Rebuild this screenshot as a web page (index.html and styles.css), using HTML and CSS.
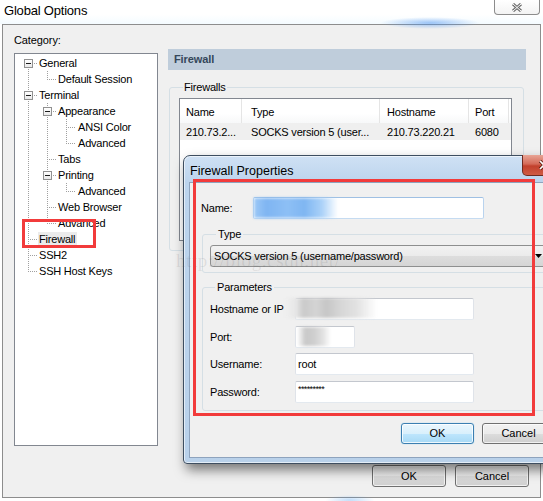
FILE: index.html
```html
<!DOCTYPE html>
<html>
<head>
<meta charset="utf-8">
<title>Global Options</title>
<link rel="stylesheet" href="styles.css">
</head>
<body>
<div class="glow glow-top"></div>
<div class="glow glow-bottom"></div>
<div class="win">
  <div class="wtitlebar">
    <span class="wtitle">Global Options</span>
    <div class="wclose">
      <svg width="12" height="9" viewBox="0 0 12 9"><path d="M2 1 L10 8 M10 1 L2 8" stroke="#707070" stroke-width="3" fill="none"/><path d="M2 1 L10 8 M10 1 L2 8" stroke="#fff" stroke-width="1" fill="none"/></svg>
    </div>
  </div>
  <div class="panel">
    <div class="panel-top">
      <div class="leftcol">
        <div class="cat">Category:</div>
        <div class="tree">
          <div class="row"><span class="g r"><span class="exp"></span></span><span class="lbl">General</span></div>
          <div class="row"><span class="g i"></span><span class="g l"></span><span class="lbl">Default Session</span></div>
          <div class="row"><span class="g t"><span class="exp"></span></span><span class="lbl">Terminal</span></div>
          <div class="row"><span class="g i"></span><span class="g t"><span class="exp"></span></span><span class="lbl">Appearance</span></div>
          <div class="row"><span class="g i"></span><span class="g i"></span><span class="g t"></span><span class="lbl lbl2">ANSI Color</span></div>
          <div class="row"><span class="g i"></span><span class="g i"></span><span class="g l"></span><span class="lbl lbl2">Advanced</span></div>
          <div class="row"><span class="g i"></span><span class="g t"></span><span class="lbl">Tabs</span></div>
          <div class="row"><span class="g i"></span><span class="g t"><span class="exp"></span></span><span class="lbl">Printing</span></div>
          <div class="row"><span class="g i"></span><span class="g i"></span><span class="g l"></span><span class="lbl lbl2">Advanced</span></div>
          <div class="row"><span class="g i"></span><span class="g t"></span><span class="lbl">Web Browser</span></div>
          <div class="row"><span class="g i"></span><span class="g l"></span><span class="lbl">Advanced</span></div>
          <div class="row"><span class="g t"></span><span class="lbl sel">Firewall</span></div>
          <div class="row"><span class="g t"></span><span class="lbl">SSH2</span></div>
          <div class="row"><span class="g l"></span><span class="lbl">SSH Host Keys</span></div>
        </div>
      </div>
      <div class="rightcol">
        <div class="pagehead">Firewall</div>
        <fieldset class="grp fwgrp">
          <legend>Firewalls</legend>
          <div class="list">
            <div class="lrow lhead"><span class="c1">Name</span><span class="c2">Type</span><span class="c3">Hostname</span><span class="c4">Port</span></div>
            <div class="lrow litem"><span class="c1">210.73.2...</span><span class="c2">SOCKS version 5 (user...</span><span class="c3">210.73.220.21</span><span class="c4">6080</span></div>
          </div>
        </fieldset>
      </div>
    </div>
    <div class="btnrow">
      <button class="btn mainbtn">OK</button>
      <button class="btn mainbtn">Cancel</button>
    </div>
  </div>
</div>

<div class="dlg">
  <div class="dtitle">Firewall Properties</div>
  <div class="dclose">
    <svg width="12" height="10" viewBox="0 0 12 10"><path d="M2 1 L10 9 M10 1 L2 9" stroke="#5a1a10" stroke-width="3.2" fill="none"/><path d="M2 1 L10 9 M10 1 L2 9" stroke="#fff" stroke-width="1.6" fill="none"/></svg>
  </div>
  <div class="dclient">
    <div class="nrow"><span class="nlabel">Name:</span><div class="tb tbname"></div></div>
    <fieldset class="grp tgrp">
      <legend>Type</legend>
      <div class="combo"><span>SOCKS version 5 (username/password)</span><svg class="arrow" width="7" height="4" viewBox="0 0 7 4"><path d="M0 0 H7 L3.5 4 Z" fill="#000"/></svg></div>
    </fieldset>
    <fieldset class="grp pgrp">
      <legend>Parameters</legend>
      <div class="pgrid">
        <span class="plabel">Hostname or IP</span><div class="tb wide"></div>
        <span class="plabel">Port:</span><div class="tb narrow"></div>
        <span class="plabel">Username:</span><div class="tb wide">root</div>
        <span class="plabel">Password:</span><div class="tb wide pw">*********</div>
      </div>
    </fieldset>
    <div class="dbtns">
      <button class="btn dbtn def">OK</button>
      <button class="btn dbtn">Cancel</button>
    </div>
  </div>
</div>

<div class="blur blur-name"></div>
<div class="blur blur-host"></div>
<div class="blur blur-port"></div>
<div class="watermark">http://blog.csdn.net/</div>
<div class="redbox red-tree"></div>
<div class="redbox red-dlg"></div>
</body>
</html>
```

FILE: styles.css
```css
html, body {
  margin: 0;
  padding: 0;
}
body {
  width: 543px;
  height: 501px;
  overflow: hidden;
  position: relative;
  background: #ffffff;
  font-family: "Liberation Sans", Arial, sans-serif;
  font-size: 11px;
  color: #000;
}

/* ---------- main window ---------- */
.win {
  position: relative;
}
.wtitlebar {
  height: 24px;
  display: flex;
  align-items: flex-start;
  background: linear-gradient(#ffffff, #ffffff 60%, #f4fbff);
}
.wtitle {
  padding-left: 4px;
  line-height: 22px;
  font-size: 13px;
  letter-spacing: -0.2px;
  color: #000;
}
.wclose {
  margin-left: auto;
  margin-right: 3px;
  width: 46px;
  height: 15px;
  box-sizing: border-box;
  border: 1px solid #8c8c8c;
  border-top: none;
  border-radius: 0 0 4px 4px;
  background: linear-gradient(#ffffff, #f3f3f3);
  display: flex;
  align-items: center;
  justify-content: center;
}

.panel {
  margin-left: 2px;
  width: 539px;
  height: 474px;
  box-sizing: border-box;
  border: 1px solid #8d8d8d;
  background: #f0f0f0;
  display: flex;
  flex-direction: column;
}
.panel-top {
  display: flex;
  align-items: flex-start;
}
.leftcol {
  padding: 8px 0 0 11px;
}
.cat {
  line-height: 14px;
  letter-spacing: -0.1px;
}
.tree {
  margin-top: 6px;
  width: 144px;
  height: 393px;
  box-sizing: border-box;
  border: 1px solid #828790;
  background: #ffffff;
  padding: 1px 0 0 4px;
}
.row {
  display: flex;
  height: 16px;
  align-items: center;
}
.g {
  flex: none;
  width: 19px;
  height: 16px;
  position: relative;
  display: flex;
  align-items: flex-start;
  justify-content: center;
}
.g::before,
.g::after {
  content: "";
  position: absolute;
}
.g.i::before,
.g.t::before {
  left: 9px;
  top: 0;
  width: 1px;
  height: 16px;
  background: repeating-linear-gradient(to bottom, #a0a0a0 0 1px, transparent 1px 2px);
}
.g.l::before {
  left: 9px;
  top: 0;
  width: 1px;
  height: 9px;
  background: repeating-linear-gradient(to bottom, #a0a0a0 0 1px, transparent 1px 2px);
}
.g.r::before {
  left: 9px;
  top: 8px;
  width: 1px;
  height: 8px;
  background: repeating-linear-gradient(to bottom, #a0a0a0 0 1px, transparent 1px 2px);
}
.g.i::after {
  display: none;
}
.g.t::after,
.g.l::after,
.g.r::after {
  left: 9px;
  top: 8px;
  width: 10px;
  height: 1px;
  background: repeating-linear-gradient(to right, #a0a0a0 0 1px, transparent 1px 2px);
}
.exp {
  margin-top: 4px;
  width: 9px;
  height: 9px;
  box-sizing: border-box;
  border: 1px solid #919191;
  background: linear-gradient(#ffffff, #e9e9e9);
  position: relative;
  z-index: 1;
  display: flex;
  align-items: center;
  justify-content: center;
}
.exp::before {
  content: "";
  width: 5px;
  height: 1px;
  background: #1c1c1c;
}
.lbl {
  padding: 0 2px 0 1px;
  line-height: 14px;
  white-space: nowrap;
  letter-spacing: -0.2px;
}
.lbl2 {
  padding-left: 2px;
}
.lbl.sel {
  background: #ebebeb;
}

.rightcol {
  margin-left: 10px;
  padding-top: 24px;
}
.pagehead {
  width: 358px;
  height: 21px;
  box-sizing: border-box;
  background: #bfcddb;
  padding-left: 6px;
  line-height: 21px;
  font-weight: bold;
  color: #34475a;
  letter-spacing: -0.1px;
}

.grp {
  margin: 0;
  border: 1px solid #d5dfe5;
  border-radius: 3px;
  box-sizing: border-box;
  min-width: 0;
}
.grp legend {
  padding: 0 2px;
  line-height: 14px;
  letter-spacing: -0.2px;
}
.fwgrp {
  margin: 10px 0 0 1px;
  width: 355px;
  padding: 4px 11px 9px 9px;
}
.fwgrp legend {
  margin-left: 4px;
  padding: 0 1px;
}
.list {
  width: 333px;
  height: 143px;
  box-sizing: border-box;
  border: 1px solid #828790;
  background: #ffffff;
}
.lrow {
  display: grid;
  grid-template-columns: 62px 138px 89px 40px;
  white-space: nowrap;
  letter-spacing: -0.2px;
}
.lhead {
  height: 24px;
  background: linear-gradient(#ffffff, #ffffff 60%, #f7f8f9);
}
.lhead span {
  padding-top: 3px;
  line-height: 21px;
  border-right: 1px solid #e5e5e5;
}
.litem {
  height: 17px;
  background: #efefef;
}
.litem span {
  padding-top: 1px;
  line-height: 17px;
}
.c1 { padding-left: 6px; }
.c2 { padding-left: 9px; }
.c3 { padding-left: 7px; }
.c4 { padding-left: 6px; }

.btnrow {
  margin-top: 19px;
  display: flex;
  justify-content: flex-end;
  gap: 9px;
  padding-right: 11px;
}
.btn {
  font-family: "Liberation Sans", Arial, sans-serif;
  font-size: 11px;
  color: #000;
  box-sizing: border-box;
  border: 1px solid #707070;
  border-radius: 3px;
  background: linear-gradient(#f2f2f2, #ebebeb 50%, #dddddd 51%, #cfcfcf);
  padding: 0;
  margin: 0;
  box-shadow: inset 0 0 0 1px rgba(255, 255, 255, 0.7);
}
.mainbtn {
  width: 74px;
  height: 22px;
}

/* ---------- dialog ---------- */
.dlg {
  position: absolute;
  left: 183px;
  top: 155px;
  width: 390px;
  box-sizing: border-box;
  border: 1px solid #3e4e60;
  border-radius: 7px 7px 4px 4px;
  background: linear-gradient(#cfe1f4, #bcd4ed 26px, #b9d1ea);
  padding: 0 5px 5px 5px;
  box-shadow: 3px 6px 12px rgba(0, 0, 0, 0.5), inset 0 0 0 1px rgba(255, 255, 255, 0.6);
}
.dtitle {
  height: 26px;
  box-sizing: border-box;
  padding: 4px 0 0 1px;
  line-height: 22px;
  font-size: 12.5px;
  color: #000;
}
.dclose {
  position: absolute;
  top: -1px;
  right: 6px;
  width: 44px;
  height: 21px;
  box-sizing: border-box;
  border: 1px solid #6e2a20;
  border-top: none;
  border-radius: 0 0 5px 5px;
  background: linear-gradient(#e8a495, #d46a58 45%, #c2402c 55%, #cf5b44);
  display: flex;
  align-items: center;
  justify-content: center;
}
.dclient {
  height: 276px;
  box-sizing: border-box;
  border: 1px solid #8ea3bd;
  background: #f0f0f0;
  padding: 14px 0 0 11px;
}
.nrow {
  display: flex;
  align-items: center;
  height: 22px;
}
.nlabel {
  width: 52px;
  letter-spacing: -0.2px;
}
.tb {
  height: 22px;
  box-sizing: border-box;
  border: 1px solid;
  border-color: #c3c7ce #dfe3e9 #e3e9ef #dfe3e9;
  border-radius: 2px;
  background: #ffffff;
  padding-left: 2px;
  line-height: 20px;
  letter-spacing: -0.2px;
}
.tbname {
  width: 231px;
  border-color: #9fc0e3 #b9d3ee #c5dbf1 #b9d3ee;
}
.tgrp {
  margin: 8px 0 0 1px;
  width: 355px;
  padding: 4px 0 5px 7px;
}
.tgrp legend {
  margin-left: 6px;
}
.combo {
  width: 341px;
  height: 22px;
  box-sizing: border-box;
  border: 1px solid #8e8f8f;
  border-radius: 3px;
  background: linear-gradient(#f2f2f2, #ebebeb 50%, #dddddd 51%, #d5d5d5);
  display: flex;
  align-items: center;
  padding-left: 3px;
  letter-spacing: -0.2px;
}
.combo .arrow {
  margin-left: auto;
  margin-right: 8px;
}
.pgrp {
  margin: 7px 0 0 1px;
  width: 355px;
  padding: 4px 0 7px 7px;
}
.pgrp legend {
  margin-left: 5px;
}
.pgrid {
  display: grid;
  grid-template-columns: 85px auto;
  grid-auto-rows: 22px;
  row-gap: 5.67px;
  align-items: center;
  justify-items: start;
}
.plabel {
  letter-spacing: -0.2px;
  white-space: nowrap;
}
.wide {
  width: 179px;
}
.narrow {
  width: 60px;
}
.pw {
  font-size: 9px;
  letter-spacing: -0.6px;
  line-height: 14px;
}
.dbtns {
  margin-top: 12px;
  padding-left: 200px;
  display: flex;
  gap: 8px;
}
.dbtn {
  width: 73px;
  height: 21px;
}
.btn.def {
  border-color: #3c7fb1;
  background: linear-gradient(#eaf6fd, #d9f0fc 50%, #bee6fd 51%, #a7d9f5);
  box-shadow: inset 0 0 0 1px rgba(255, 255, 255, 0.8), 0 0 1px #6cc4f0;
}

/* ---------- overlays (redaction, watermark, annotations) ---------- */
.blur {
  position: absolute;
  filter: blur(1.5px);
}
.blur-name {
  left: 254px;
  top: 198px;
  width: 84px;
  height: 20px;
  background: linear-gradient(90deg, #9cc8f6, #7fb5f2 15%, #8dbff5 40%, #7fb6f2 60%, #a8d0f8 80%, rgba(220, 236, 252, 0));
}
.blur-host {
  left: 285px;
  top: 298px;
  width: 92px;
  height: 20px;
  background: linear-gradient(90deg, rgba(230,230,230,0), #e6e6e6 12%, #cacaca 20%, #d4d4d4 34%, #c6c6c6 45%, #d6d6d6 60%, #e2e2e2 78%, rgba(240,240,240,0));
}
.blur-port {
  left: 297px;
  top: 327px;
  width: 34px;
  height: 19px;
  background: linear-gradient(90deg, rgba(230,230,230,0), #c8c8c8 25%, #cfcfcf 50%, #e0e0e0 75%, rgba(240,240,240,0));
}
.watermark {
  position: absolute;
  left: 176px;
  top: 250px;
  font-family: "Liberation Serif", "Times New Roman", serif;
  font-size: 19px;
  letter-spacing: 0.6px;
  color: rgba(90, 90, 90, 0.13);
  white-space: nowrap;
}
.redbox {
  position: absolute;
  box-sizing: border-box;
  border: 3px solid #f23b3b;
}
.red-tree {
  left: 22px;
  top: 219px;
  width: 74px;
  height: 29px;
}
.red-dlg {
  left: 193px;
  top: 179px;
  width: 342px;
  height: 237px;
}
.glow {
  position: absolute;
  pointer-events: none;
}
.glow-top {
  left: 380px;
  top: 17px;
  width: 100px;
  height: 12px;
  background: radial-gradient(ellipse at center, rgba(80, 150, 240, 0.55), rgba(80, 150, 240, 0) 70%);
  z-index: 1;
}
.glow-bottom {
  left: 325px;
  top: 495px;
  width: 50px;
  height: 10px;
  background: radial-gradient(ellipse at center, rgba(80, 160, 240, 0.35), rgba(80, 160, 240, 0) 70%);
  z-index: 1;
}
```
